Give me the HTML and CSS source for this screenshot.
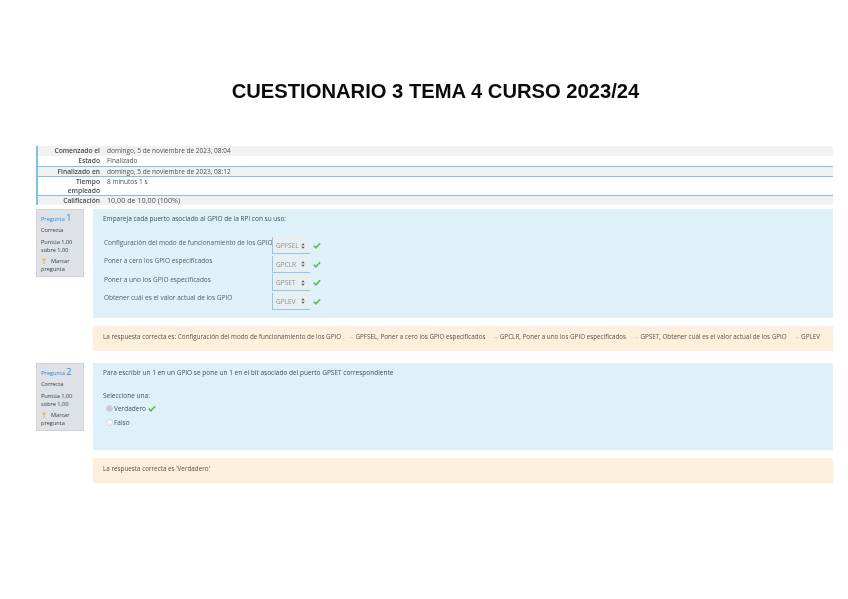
FILE: index.html
```html
<!DOCTYPE html>
<html lang="es">
<head>
<meta charset="utf-8">
<title>Cuestionario 3</title>
<link rel="stylesheet" href="styles.css">
</head>
<body>
<h1 class="title">CUESTIONARIO 3 TEMA 4 CURSO 2023/24</h1>
<main class="page">
  <table class="summary">
    <tr class="odd h10"><th>Comenzado el</th><td>domingo, 5 de noviembre de 2023, 08:04</td></tr>
    <tr class="even h10"><th>Estado</th><td>Finalizado</td></tr>
    <tr class="odd h9"><th>Finalizado en</th><td>domingo, 5 de noviembre de 2023, 08:12</td></tr>
    <tr class="even h18"><th>Tiempo<br>empleado</th><td>8 minutos 1 s</td></tr>
    <tr class="odd h10"><th>Calificación</th><td class="score">10,00 de 10,00 (100%)</td></tr>
  </table>

  <section class="question q1">
    <aside class="info">
      <div class="qno">Pregunta <b>1</b></div>
      <div class="state">Correcta</div>
      <div class="grade">Puntúa 1,00<br>sobre 1,00</div>
      <div class="flag"><svg class="flagicon" viewBox="0 0 8 8"><path d="M1 1h6L5 3.2H4.6V8H3.4V3.2H3z" fill="#f0ad4e"/></svg>Marcar<br>pregunta</div>
    </aside>
    <div class="body">
      <div class="content c1">
        <p class="qtext">Empareja cada puerto asociado al GPIO de la RPi con su uso:</p>
        <div class="matches">
          <div class="mrow"><span class="mlabel">Configuración del modo de funcionamiento de los GPIO</span><span class="sel">GPFSEL<svg class="updown" viewBox="0 0 6 8"><path d="M3 0l2.5 3h-5zM3 8L.5 5h5z" fill="#555"/></svg></span><svg class="tick" viewBox="0 0 10 8"><path d="M1 4.2l2.6 2.6L9 1.2" fill="none" stroke="#5cb85c" stroke-width="2"/></svg></div>
          <div class="mrow"><span class="mlabel">Poner a cero los GPIO especificados</span><span class="sel">GPCLR<svg class="updown" viewBox="0 0 6 8"><path d="M3 0l2.5 3h-5zM3 8L.5 5h5z" fill="#555"/></svg></span><svg class="tick" viewBox="0 0 10 8"><path d="M1 4.2l2.6 2.6L9 1.2" fill="none" stroke="#5cb85c" stroke-width="2"/></svg></div>
          <div class="mrow"><span class="mlabel">Poner a uno los GPIO especificados</span><span class="sel">GPSET<svg class="updown" viewBox="0 0 6 8"><path d="M3 0l2.5 3h-5zM3 8L.5 5h5z" fill="#555"/></svg></span><svg class="tick" viewBox="0 0 10 8"><path d="M1 4.2l2.6 2.6L9 1.2" fill="none" stroke="#5cb85c" stroke-width="2"/></svg></div>
          <div class="mrow"><span class="mlabel">Obtener cuál es el valor actual de los GPIO</span><span class="sel">GPLEV<svg class="updown" viewBox="0 0 6 8"><path d="M3 0l2.5 3h-5zM3 8L.5 5h5z" fill="#555"/></svg></span><svg class="tick" viewBox="0 0 10 8"><path d="M1 4.2l2.6 2.6L9 1.2" fill="none" stroke="#5cb85c" stroke-width="2"/></svg></div>
        </div>
      </div>
      <div class="feedback f1">La respuesta correcta es: Configuración del modo de funcionamiento de los GPIO<span class="arrow">→</span>GPFSEL, Poner a cero los GPIO especificados<span class="arrow">→</span>GPCLR, Poner a uno los GPIO especificados<span class="arrow">→</span>GPSET, Obtener cuál es el valor actual de los GPIO<span class="arrow">→</span>GPLEV</div>
    </div>
  </section>

  <section class="question q2">
    <aside class="info">
      <div class="qno">Pregunta <b>2</b></div>
      <div class="state">Correcta</div>
      <div class="grade">Puntúa 1,00<br>sobre 1,00</div>
      <div class="flag"><svg class="flagicon" viewBox="0 0 8 8"><path d="M1 1h6L5 3.2H4.6V8H3.4V3.2H3z" fill="#f0ad4e"/></svg>Marcar<br>pregunta</div>
    </aside>
    <div class="body">
      <div class="content c2">
        <p class="qtext">Para escribir un 1 en un GPIO se pone un 1 en el bit asociado del puerto GPSET correspondiente</p>
        <p class="prompt">Seleccione una:</p>
        <div class="opt"><span class="radio on"></span>Verdadero<svg class="tick small" viewBox="0 0 10 8"><path d="M1 4.2l2.6 2.6L9 1.2" fill="none" stroke="#5cb85c" stroke-width="2"/></svg></div>
        <div class="opt"><span class="radio"></span>Falso</div>
      </div>
      <div class="feedback f2">La respuesta correcta es 'Verdadero'</div>
    </div>
  </section>
</main>
</body>
</html>
```

FILE: styles.css
```css
html, body { margin: 0; padding: 0; background: #fff; }
body {
  width: 848px;
  height: 599px;
  overflow: hidden;
  font-family: "Open Sans", "Liberation Sans", sans-serif;
  font-size: 6.5px;
  color: #4a5058;
}
.title {
  margin: 0;
  padding: 80px 0 0 23px;
  height: 146px;
  box-sizing: border-box;
  text-align: center;
  font: bold 20.2px/22px "Liberation Sans", sans-serif;
  color: #0b0b0b;
  filter: blur(0.25px);
}
.page {
  padding: 0 15px 0 36px;
  filter: blur(0.6px);
}
.summary {
  width: 797px;
  border-collapse: collapse;
  border-left: 2px solid #7cc4e0;
  margin-bottom: 4px;
}
.summary th {
  width: 62px;
  padding: 0 4px 0 0;
  text-align: right;
  font-size: 6.7px;
  font-weight: 600;
  vertical-align: top;
  line-height: 9px;
  color: #454a50;
}
.summary td {
  padding: 0 0 0 3px;
  vertical-align: top;
  line-height: 9px;
}
.summary .score { font-size: 7.2px; }
.summary tr { border-bottom: 1px solid #7cc4e0; }
.summary tr:first-child { border-bottom: 0; }
.summary tr:last-child { border-bottom: 0; }
.summary .odd { background: #f1f1f1; }
.summary .h10 { height: 10px; }
.summary .h9 { height: 9px; }
.summary .h18 { height: 18px; }
.question {
  display: grid;
  grid-template-columns: 48px 1fr;
  column-gap: 9px;
  align-items: start;
}
.q2 { margin-top: 12px; }
.info {
  background: #dee2e6;
  border: 1px solid #cfd3d8;
  box-sizing: border-box;
  padding: 4px 2px 0 4px;
  font-size: 5.6px;
  line-height: 8px;
  color: #343a40;
  height: 68px;
}
.qno { color: #1f8ce0; margin-bottom: 3px; }
.qno b { font-size: 9px; font-weight: 400; }
.state { margin-bottom: 4px; }
.grade { margin-bottom: 3px; }
.flagicon { width: 6px; height: 6px; margin-right: 4px; vertical-align: -1px; }
.content { background: #def1f8; box-sizing: border-box; padding: 5px 10px; }
.c1 { height: 109px; }
.c2 { height: 87px; }
.qtext { margin: 0; line-height: 10px; color: #3f4d5c; }
.matches { margin-top: 13px; display: flex; flex-direction: column; gap: 1px; }
.mrow { display: flex; align-items: center; height: 17.5px; color: #51606e; }
.mlabel { width: 167px; margin: 0 1px 7px 1px; white-space: nowrap; }
.sel {
  width: 38px;
  height: 17px;
  box-sizing: border-box;
  border-left: 1px solid #8ecae6;
  border-bottom: 1px solid #8ecae6;
  background: #e9eef1;
  color: #8a9095;
  padding: 1px 5px 0 3px;
  font-size: 6.5px;
  line-height: 11px;
  display: flex;
  justify-content: space-between;
  align-items: center;
}
.updown { width: 4px; height: 6px; }
.tick { width: 8px; height: 7px; margin-left: 3px; }
.prompt { margin: 13px 0 0; line-height: 10px; }
.opt { display: flex; align-items: center; height: 14px; padding-left: 3px; }
.radio {
  width: 5px; height: 5px; border-radius: 50%;
  border: 1px solid #cfd6da; background: #f6f8f9; margin-right: 1px;
}
.radio.on { background: #c9cdd0; }
.tick.small { margin-left: 2px; }
.feedback {
  margin-top: 8px;
  height: 25px;
  box-sizing: border-box;
  padding: 6px 10px;
  background: #fcefdc;
  color: #5a5348;
  line-height: 10px;
  white-space: nowrap;
  overflow: hidden;
  font-size: 6.3px;
}
.arrow { color: #b0a998; margin: 0 1px 0 7px; }
```
